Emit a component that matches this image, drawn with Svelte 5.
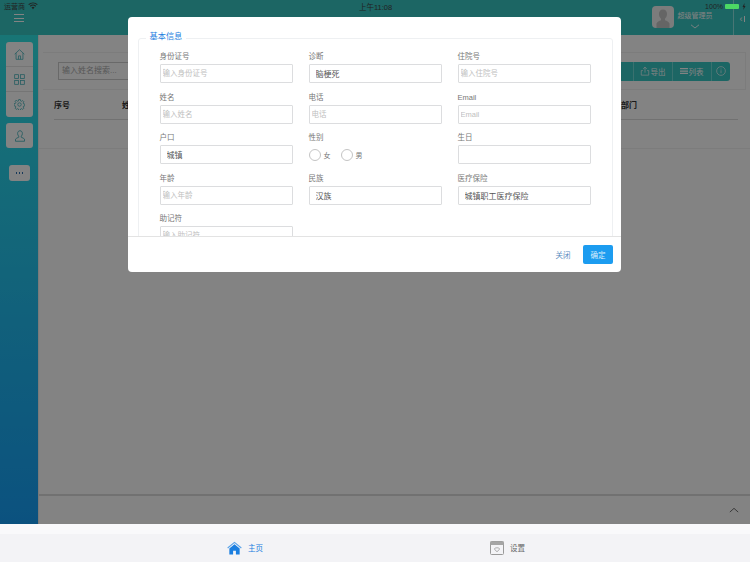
<script>
	const fields = [
		{ label: '身份证号', placeholder: '输入身份证号' },
		{ label: '诊断', value: '脑梗死' },
		{ label: '住院号', placeholder: '输入住院号' },
		{ label: '姓名', placeholder: '输入姓名' },
		{ label: '电话', placeholder: '电话' },
		{ label: 'Email', placeholder: 'Email' },
		{ label: '户口', value: '城镇' },
		{ label: '性别', radios: ['女', '男'] },
		{ label: '生日', value: '' },
		{ label: '年龄', placeholder: '输入年龄' },
		{ label: '民族', value: '汉族' },
		{ label: '医疗保险', value: '城镇职工医疗保险' },
		{ label: '助记符', placeholder: '输入助记符' }
	];
</script>

<div class="app">
	<div class="screen">
		<header class="topbar">
			<button class="burger" aria-label="菜单"><i></i><i></i><i></i></button>
			<div class="user">
				<div class="avatar">
					<svg viewBox="0 0 22 22" width="22" height="22">
						<path d="M11 3.500c-2.600 0-4 2-4 4.600 0 2 .9 3.600 2 4.600v1.600c-2 .8-3.500 1.400-4.500 3.200v4.500h13v-4.500c-1-1.800-2.500-2.400-4.500-3.200v-1.600c1.100-1 2-2.600 2-4.600 0-2.600-1.400-4.600-4-4.600z" fill="#c4c4c4" />
					</svg>
				</div>
				<div class="user-name">
					<span>超级管理员</span>
					<svg viewBox="0 0 10 5" width="10" height="5"><path d="M1 .8 5 4 9 .8" fill="none" stroke="#fff" stroke-width=".9" /></svg>
				</div>
			</div>
			<div class="collapse"><span>‹</span><i></i></div>
		</header>

		<div class="status">
			<div class="status-left">
				<span>运营商</span>
				<svg viewBox="0 0 12 9" width="10" height="8">
					<path d="M6 8.500 4.200 6.400a2.600 2.600 0 0 1 3.600 0z" fill="#222" />
					<path d="M2.700 4.800a5 5 0 0 1 6.600 0M.8 2.900a7.900 7.900 0 0 1 10.400 0" fill="none" stroke="#222" stroke-width="1.300" />
				</svg>
			</div>
			<span class="status-time">上午11:08</span>
			<div class="status-right">
				<span>100%</span>
				<div class="battery"></div>
				<svg viewBox="0 0 4 7" width="4" height="7"><path d="M2.500 0 .5 4h1.200L1.300 7l2.200-4H2.300z" fill="#222" /></svg>
			</div>
		</div>

		<div class="body">
			<aside class="sidebar">
				<div class="side-card">
					<div class="side-cell">
						<svg viewBox="0 0 16 16" width="11" height="11" fill="none" stroke="#3fb0b8" stroke-width="1.100">
							<path d="M1 7.500 8 1l7 6.500M3 6v9h10V6M6.500 15v-5h3v5" />
						</svg>
					</div>
					<div class="side-cell">
						<svg viewBox="0 0 16 16" width="11" height="11" fill="none" stroke="#3fb0b8" stroke-width="1.100">
							<rect x="1" y="1" width="5.700" height="5.700" /><rect x="9.300" y="1" width="5.700" height="5.700" />
							<rect x="1" y="9.300" width="5.700" height="5.700" /><rect x="9.300" y="9.300" width="5.700" height="5.700" />
						</svg>
					</div>
					<div class="side-cell">
						<svg viewBox="0 0 16 16" width="11" height="11" fill="none" stroke="#3fb0b8" stroke-width="1.100">
							<circle cx="8" cy="8" r="2.500" />
							<path d="M6.800 .8h2.400l.4 2 1.400.6 1.700-1.100 1.700 1.700-1.100 1.700.6 1.400 2 .4v2.400l-2 .4-.6 1.400 1.100 1.700-1.700 1.700-1.700-1.100-1.400.6-.4 2H6.800l-.4-2-1.400-.6-1.700 1.100-1.700-1.700 1.100-1.700-.6-1.400-2-.4V6.800l2-.4.6-1.400-1.100-1.700 1.700-1.700L5 3.400l1.400-.6z" />
						</svg>
					</div>
				</div>
				<div class="side-card single">
					<div class="side-cell">
						<svg viewBox="0 0 16 16" width="12" height="12" fill="none" stroke="#3fb0b8" stroke-width="1.100">
							<path d="M8 1c-2 0-3.200 1.600-3.200 3.700 0 1.500.7 2.800 1.500 3.500v1.500c-1.800.7-3.400 1.300-4.300 2.500V15h12v-2.800c-.9-1.200-2.500-1.800-4.300-2.500V8.200c.8-.7 1.500-2 1.500-3.500C11.200 2.600 10 1 8 1z" />
						</svg>
					</div>
				</div>
				<div class="side-more"><span></span><span></span><span></span></div>
			</aside>

			<main class="main">
				<section class="tools">
					<div class="search">输入姓名搜索...</div>
					<div class="actions">
						<span class="action stub">删除</span>
						<span class="action">
							<svg viewBox="0 0 12 12" width="10" height="10" fill="none" stroke="#fff" stroke-width=".8"><path d="M6 8V1.500M3.800 3.500 6 1.300l2.200 2.200M3.500 5.500H1.500v5.500h9V5.500h-2" /></svg>
							<span>导出</span>
						</span>
						<span class="action">
							<svg viewBox="0 0 9 9" width="8" height="8" fill="#fff"><path d="M0 1h9v1.500H0zM0 3.800h9v1.500H0zM0 6.500h9V8H0z" /></svg>
							<span>列表</span>
						</span>
						<span class="action info">
							<svg viewBox="0 0 11 11" width="10" height="10" fill="none" stroke="#fff" stroke-width=".7"><circle cx="5.500" cy="5.500" r="4.800" /><path d="M5.500 4.700v3.200M5.500 2.800v1" /></svg>
						</span>
					</div>
				</section>
				<div class="table-head">
					<span class="col-no">序号</span>
					<span class="col-name">姓名</span>
					<span class="col-dept">部门</span>
				</div>
				<div class="table-row"></div>
				<div class="spacer"></div>
				<div class="pager">
					<svg viewBox="0 0 12 7" width="10" height="6"><path d="M1 6 6 1.500 11 6" fill="none" stroke="#555" stroke-width="1" /></svg>
				</div>
			</main>
		</div>

		<div class="overlay">
			<div class="modal">
				<div class="modal-body">
					<fieldset>
						<legend>基本信息</legend>
						<div class="form">
							{#each fields as f}
								<div class="field">
									<div class="label">{f.label}</div>
									{#if f.radios}
										<div class="radios">
											{#each f.radios as r}
												<span class="radio"><i></i>{r}</span>
											{/each}
										</div>
									{:else}
										<input class="input" type="text" value={f.value ?? ''} placeholder={f.placeholder ?? ''} />
									{/if}
								</div>
							{/each}
						</div>
					</fieldset>
				</div>
				<footer class="modal-foot">
					<button class="btn-link">关闭</button>
					<button class="btn-primary">确定</button>
				</footer>
			</div>
		</div>
	</div>

	<nav class="tabbar">
		<div class="tab active">
			<svg viewBox="0 0 16 14" width="15" height="14">
				<path d="M8 3 2.500 7.500V14h4V9.800h3V14h4V7.500z" fill="#1a7ee0" />
				<path d="M.7 7 8 1l7.300 6" fill="none" stroke="#5aa2e8" stroke-width="1.200" />
			</svg>
			<span>主页</span>
		</div>
		<div class="tab">
			<svg viewBox="0 0 14 14" width="14" height="14">
				<rect x=".5" y=".5" width="13" height="13" rx="1" fill="#f3f3f6" stroke="#9a9a9a" />
				<rect x=".5" y=".5" width="13" height="3.500" fill="#a5a5a5" />
				<path d="M7 10.800 4.800 8.500a1.300 1.300 0 0 1 2.200-1.300 1.300 1.300 0 0 1 2.200 1.300z" fill="none" stroke="#888" stroke-width=".7" />
			</svg>
			<span>设置</span>
		</div>
	</nav>
</div>

<style>
	:global(body) {
		margin: 0;
		font-family: 'Liberation Sans', 'Noto Sans CJK SC', sans-serif;
	}

	.app {
		width: 750px;
		height: 562px;
		display: flex;
		flex-direction: column;
		overflow: hidden;
	}

	.screen {
		position: relative;
		height: 524px;
		display: flex;
		flex-direction: column;
		background: #fff;
	}

	/* header */
	.topbar {
		height: 35px;
		flex: none;
		display: flex;
		align-items: flex-start;
		background: #38c6c3;
		padding-left: 14px;
		box-sizing: border-box;
	}

	.burger {
		margin-top: 14px;
		width: 10px;
		padding: 0;
		border: 0;
		background: none;
		display: flex;
		flex-direction: column;
		gap: 2.500px;
	}

	.burger i {
		display: block;
		height: 1px;
		background: #fff;
	}

	.user {
		margin-left: auto;
		margin-top: 6px;
		display: flex;
		gap: 3px;
	}

	.avatar {
		width: 22px;
		height: 22px;
		border-radius: 4px;
		background: #f2f2f2;
		overflow: hidden;
	}

	.user-name {
		display: flex;
		flex-direction: column;
		align-items: center;
		gap: 2px;
		width: 36px;
		font-size: 7px;
		line-height: 12px;
		white-space: nowrap;
		color: #fff;
		padding-top: 4px;
	}

	.collapse {
		margin-left: 20px;
		width: 17px;
		height: 35px;
		border-left: 1px solid #8fe6e3;
		box-sizing: border-box;
		display: flex;
		align-items: center;
		justify-content: center;
		gap: 1px;
		color: #fff;
		font-size: 9px;
		padding-top: 2px;
	}

	.collapse i {
		width: 1px;
		height: 6px;
		background: #fff;
	}

	.status {
		position: absolute;
		top: 0;
		left: 0;
		right: 0;
		height: 12px;
		z-index: 6;
		padding: 0 4px;
		display: flex;
		align-items: center;
		justify-content: space-between;
		font-size: 7px;
		color: #222;
	}

	.status-left,
	.status-right {
		display: flex;
		align-items: center;
		gap: 3px;
	}

	.status-time {
		position: absolute;
		left: 1px;
		right: 0;
		text-align: center;
		font-size: 7.500px;
	}

	.status-right {
		gap: 2px;
	}

	.battery {
		width: 14px;
		height: 5px;
		margin-right: 1px;
		background: #4cd964;
		border-radius: 1px;
	}

	/* sidebar and page behind the modal */
	.body {
		flex: 1;
		display: flex;
		min-height: 0;
	}

	.sidebar {
		width: 38px;
		flex: none;
		padding: 7px 0 0 6px;
		box-sizing: border-box;
		display: flex;
		flex-direction: column;
		background: linear-gradient(#30e4e4, #179ff8);
	}

	.side-card {
		width: 27px;
		background: #fff;
		border-radius: 3px;
		overflow: hidden;
	}

	.side-card.single {
		margin-top: 6px;
	}

	.side-cell {
		height: 25px;
		display: flex;
		align-items: center;
		justify-content: center;
		border-bottom: 1px solid #e4e4e4;
		box-sizing: border-box;
	}

	.side-cell:last-child {
		border-bottom: 0;
	}

	.side-more {
		margin: 17px 0 0 2.500px;
		width: 21.500px;
		height: 16px;
		background: #fff;
		border-radius: 3px;
		display: flex;
		align-items: center;
		justify-content: center;
		gap: 1.500px;
	}

	.side-more span {
		width: 1.500px;
		height: 1.500px;
		background: #2d6fb0;
	}

	.main {
		flex: 1;
		display: flex;
		flex-direction: column;
		min-width: 0;
		background: #fff;
		padding-top: 17px;
		box-sizing: border-box;
		border-left: 1px solid #eee;
	}

	.tools {
		height: 36px;
		margin: 0 4px 0 4px;
		display: flex;
		align-items: center;
		justify-content: space-between;
		padding: 0 15px 0 15px;
		border: 1px solid #f2f2f2;
		border-left: 0;
	}

	.search {
		width: 150px;
		height: 18px;
		border: 1px solid #ccc;
		font-size: 8px;
		line-height: 16px;
		color: #aaa;
		padding-left: 3px;
		box-sizing: border-box;
	}

	.actions {
		height: 19px;
		display: flex;
		align-items: center;
		background: #38c6c3;
		border-radius: 3px;
		font-size: 7.500px;
		color: #fff;
	}

	.action {
		display: flex;
		align-items: center;
		justify-content: center;
		gap: 1px;
		width: 39px;
		height: 100%;
		border-left: 1px solid #6fdcd9;
		box-sizing: border-box;
	}

	.action.stub {
		border-left: 0;
	}

	.action.info {
		width: 19.500px;
	}

	.table-head {
		height: 30px;
		margin: 0 12px 0 15px;
		display: flex;
		align-items: center;
		font-size: 8px;
		font-weight: 700;
		color: #333;
		border-bottom: 1px solid #ddd;
		box-sizing: border-box;
	}

	.col-no {
		width: 68px;
		flex: none;
	}

	.col-name {
		width: 499px;
		flex: none;
	}

	.table-row {
		height: 28px;
		border-bottom: 1px solid #f2f2f2;
	}

	.spacer {
		flex: 1;
	}

	.pager {
		height: 30px;
		flex: none;
		border-top: 2px solid #dcdcdc;
		box-sizing: border-box;
		display: flex;
		justify-content: flex-end;
		align-items: center;
		padding-right: 11px;
	}

	/* modal */
	.overlay {
		position: absolute;
		inset: 0;
		z-index: 5;
		background: rgba(0, 0, 0, 0.485);
	}

	.modal {
		position: absolute;
		left: 128px;
		top: 17px;
		width: 493px;
		height: 255px;
		background: #fff;
		border-radius: 4px;
		display: flex;
		flex-direction: column;
		overflow: hidden;
	}

	.modal-body {
		height: 219px;
		flex: none;
		overflow: hidden;
		padding: 14px 9px 0 10px;
		box-sizing: border-box;
	}

	fieldset {
		margin: 0;
		padding: 0 21px 0 20.500px;
		border: 1px solid #eef0f2;
		border-radius: 3px;
		height: 240px;
		box-sizing: border-box;
	}

	legend {
		margin-left: -14px;
		padding: 0 4px 2px;
		font-size: 8.200px;
		line-height: 12px;
		color: #1f7fe0;
	}

	.form {
		display: grid;
		grid-template-columns: repeat(3, 133px);
		column-gap: 16px;
		row-gap: 2.600px;
	}

	.field {
		height: 38px;
	}

	.label {
		height: 19px;
		padding-top: 5px;
		box-sizing: border-box;
		font-size: 7.500px;
		line-height: 14px;
		color: #777;
	}

	.input {
		display: block;
		width: 100%;
		height: 19px;
		padding: 0 6px;
		border: 1px solid #dcdddf;
		border-radius: 1px;
		box-sizing: border-box;
		font-family: inherit;
		font-size: 8px;
		color: #555;
		outline: none;
		background: #fff;
	}

	.input::placeholder {
		color: #c0c0c0;
		font-size: 7.500px;
	}

	.input[placeholder]:not([placeholder='']) {
		padding-left: 2px;
	}

	.radios {
		height: 19px;
		display: flex;
		align-items: center;
		gap: 10px;
	}

	.radio {
		display: flex;
		align-items: center;
		gap: 3px;
		font-size: 7px;
		color: #777;
	}

	.radio i {
		width: 12px;
		height: 12px;
		box-sizing: border-box;
		border: 1px solid #c4c4c4;
		border-radius: 50%;
	}

	.modal-foot {
		flex: 1;
		border-top: 1px solid #e3e3e3;
		display: flex;
		align-items: center;
		justify-content: flex-end;
		gap: 12.500px;
		padding: 0 8px;
	}

	.btn-link,
	.btn-primary {
		font-family: inherit;
		font-size: 7.500px;
		border: 0;
		padding: 0;
	}

	.btn-link {
		background: none;
		color: #5a8cc0;
	}

	.btn-primary {
		width: 30px;
		height: 19px;
		background: #1c9cf0;
		color: #d8eefc;
		border-radius: 2px;
	}

	/* bottom tabs */
	.tabbar {
		flex: 1;
		display: grid;
		grid-template-columns: 1fr 1fr;
		background: linear-gradient(#f9f9fb 10px, #f3f3f6 10px);
		padding-top: 9px;
		box-sizing: border-box;
	}

	.tab {
		display: flex;
		align-items: center;
		gap: 6px;
		font-size: 7.500px;
		color: #666;
	}

	.tab.active {
		padding-left: 227px;
		color: #1a7ee0;
	}

	.tab:not(.active) {
		padding-left: 115px;
	}
</style>
